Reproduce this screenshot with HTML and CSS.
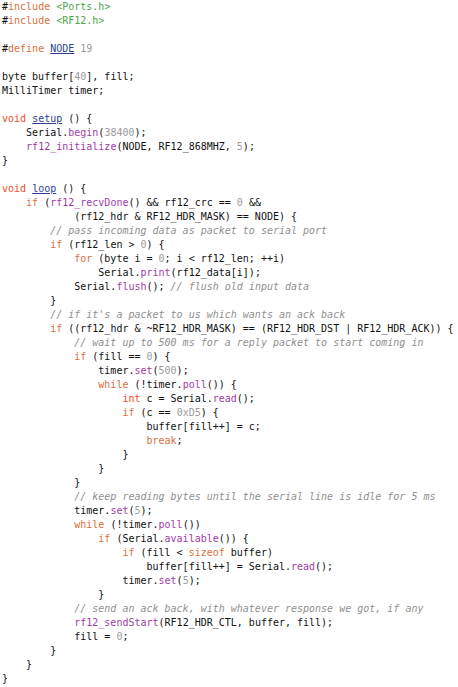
FILE: index.html
```html
<!DOCTYPE html>
<html>
<head>
<meta charset="utf-8">
<link rel="stylesheet" href="styles.css">
</head>
<body>
<div class="code">
<div class="ln"><span class="pp">#</span><span class="kw">include</span> <span class="str">&lt;Ports.h&gt;</span></div>
<div class="ln"><span class="pp">#</span><span class="kw">include</span> <span class="str">&lt;RF12.h&gt;</span></div>
<div class="ln"> </div>
<div class="ln"><span class="pp">#</span><span class="kw">define</span> <span class="def">NODE</span> <span class="num">19</span></div>
<div class="ln"> </div>
<div class="ln">byte buffer[<span class="num">40</span>], fill;</div>
<div class="ln">MilliTimer timer;</div>
<div class="ln"> </div>
<div class="ln"><span class="ty">void</span> <span class="def">setup</span> () {</div>
<div class="ln">    Serial.<span class="fn">begin</span>(<span class="num">38400</span>);</div>
<div class="ln">    <span class="fn">rf12_initialize</span>(NODE, RF12_868MHZ, <span class="num">5</span>);</div>
<div class="ln">}</div>
<div class="ln"> </div>
<div class="ln"><span class="ty">void</span> <span class="def">loop</span> () {</div>
<div class="ln">    <span class="kw">if</span> (<span class="fn">rf12_recvDone</span>() &amp;&amp; rf12_crc == <span class="num">0</span> &amp;&amp;</div>
<div class="ln">            (rf12_hdr &amp; RF12_HDR_MASK) == NODE) {</div>
<div class="ln">        <span class="cm">// pass incoming data as packet to serial port</span></div>
<div class="ln">        <span class="kw">if</span> (rf12_len &gt; <span class="num">0</span>) {</div>
<div class="ln">            <span class="kw">for</span> (byte i = <span class="num">0</span>; i &lt; rf12_len; ++i)</div>
<div class="ln">                Serial.<span class="fn">print</span>(rf12_data[i]);</div>
<div class="ln">            Serial.<span class="fn">flush</span>(); <span class="cm">// flush old input data</span></div>
<div class="ln">        }</div>
<div class="ln">        <span class="cm">// if it's a packet to us which wants an ack back</span></div>
<div class="ln">        <span class="kw">if</span> ((rf12_hdr &amp; ~RF12_HDR_MASK) == (RF12_HDR_DST | RF12_HDR_ACK)) {</div>
<div class="ln">            <span class="cm">// wait up to 500 ms for a reply packet to start coming in</span></div>
<div class="ln">            <span class="kw">if</span> (fill == <span class="num">0</span>) {</div>
<div class="ln">                timer.<span class="fn">set</span>(<span class="num">500</span>);</div>
<div class="ln">                <span class="kw">while</span> (!timer.<span class="fn">poll</span>()) {</div>
<div class="ln">                    <span class="ty">int</span> c = Serial.<span class="fn">read</span>();</div>
<div class="ln">                    <span class="kw">if</span> (c == <span class="num">0xD5</span>) {</div>
<div class="ln">                        buffer[fill++] = c;</div>
<div class="ln">                        <span class="kw">break</span>;</div>
<div class="ln">                    }</div>
<div class="ln">                }</div>
<div class="ln">            }</div>
<div class="ln">            <span class="cm">// keep reading bytes until the serial line is idle for 5 ms</span></div>
<div class="ln">            timer.<span class="fn">set</span>(<span class="num">5</span>);</div>
<div class="ln">            <span class="kw">while</span> (!timer.<span class="fn">poll</span>())</div>
<div class="ln">                <span class="kw">if</span> (Serial.<span class="fn">available</span>()) {</div>
<div class="ln">                    <span class="kw">if</span> (fill &lt; <span class="kw">sizeof</span> buffer)</div>
<div class="ln">                        buffer[fill++] = Serial.<span class="fn">read</span>();</div>
<div class="ln">                    timer.<span class="fn">set</span>(<span class="num">5</span>);</div>
<div class="ln">                }</div>
<div class="ln">            <span class="cm">// send an ack back, with whatever response we got, if any</span></div>
<div class="ln">            <span class="fn">rf12_sendStart</span>(RF12_HDR_CTL, buffer, fill);</div>
<div class="ln">            fill = <span class="num">0</span>;</div>
<div class="ln">        }</div>
<div class="ln">    }</div>
<div class="ln">}</div>
</div>
</body>
</html>
```
FILE: styles.css
```css
html, body {
  margin: 0;
  padding: 0;
  background: #ffffff;
}
.code {
  display: flex;
  flex-direction: column;
  padding: 0 0 0 2px;
  font-family: "DejaVu Sans Mono", monospace;
  font-size: 10px;
  line-height: 14px;
  color: #111111;
}
.ln {
  white-space: pre;
  height: 14px;
}
.pp { color: #111111; }
.kw { color: #dc6f3a; }
.ty { color: #ee4b26; }
.str { color: #4aa64a; }
.num { color: #9b9b9b; }
.fn { color: #a13ba6; }
.def { color: #2c3f90; text-decoration: underline; }
.cm { color: #8f8f8f; font-style: italic; }
```
